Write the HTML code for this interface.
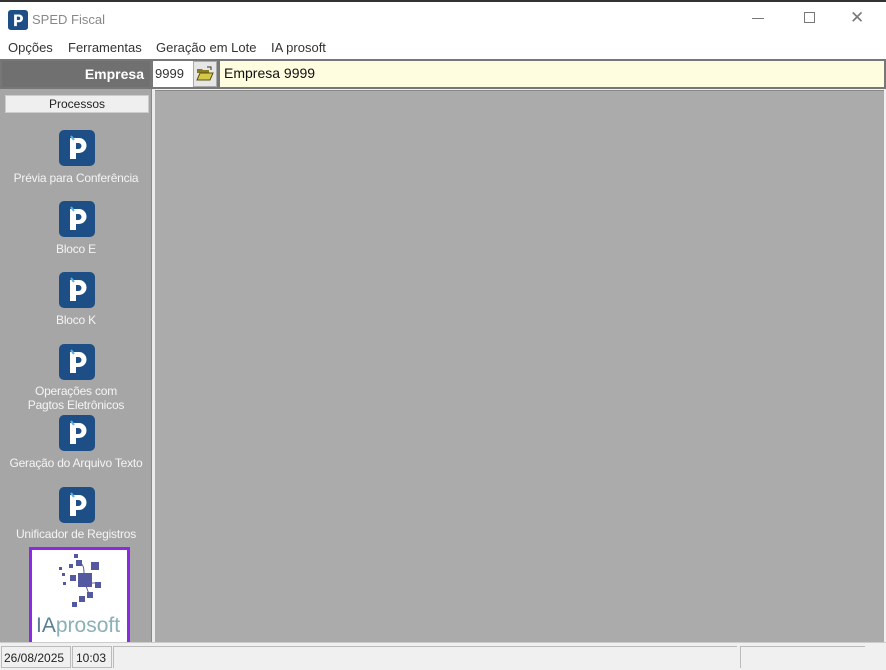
<!DOCTYPE html>
<html><head><style>
*{margin:0;padding:0;box-sizing:border-box}
body{width:886px;height:670px;overflow:hidden;background:#f0f0f0;font-family:"Liberation Sans",sans-serif;position:relative}
.a{position:absolute}
.lbl{position:absolute;left:0;width:152px;text-align:center;color:#f4f4f4;font-size:12px;line-height:14px;letter-spacing:-0.2px}
.ic{position:absolute;left:59px;width:36px;height:36px}
</style></head><body>
<div class="a" style="left:0;top:0;width:886px;height:2px;background:#333"></div>
<div class="a" style="left:0;top:2px;width:886px;height:36px;background:#fff"></div>
<svg class="a" style="left:8px;top:10px" width="20" height="20" viewBox="0 0 36 36"><rect width="36" height="36" rx="5" fill="#1d4f86"/><path d="M11 8h9a7 7 0 0 1 0 14h-4v7h-5z" fill="#fff"/><path d="M16 12h3a3 3 0 0 1 0 6h-3z" fill="#1d4f86"/></svg>
<div class="a" style="left:32px;top:12px;font-size:13px;color:#888">SPED Fiscal</div>
<div class="a" style="left:752px;top:18px;width:12px;height:1px;background:#777"></div>
<div class="a" style="left:804px;top:12px;width:11px;height:11px;border:1px solid #777"></div>
<div class="a" style="left:850px;top:8px;font-size:17px;color:#777">✕</div>
<div class="a" style="left:0;top:38px;width:886px;height:21px;background:#fff;font-size:13px;color:#333">
<span class="a" style="left:8px;top:2px">Opções</span><span class="a" style="left:68px;top:2px">Ferramentas</span><span class="a" style="left:156px;top:2px">Geração em Lote</span><span class="a" style="left:271px;top:2px">IA prosoft</span></div>
<div class="a" style="left:0;top:59px;width:886px;height:30px;background:#777"></div>
<div class="a" style="left:2px;top:61px;width:148px;height:26px;background:#707070;color:#fff;font-weight:bold;font-size:14px;text-align:right;padding:5px 6px">Empresa</div>
<div class="a" style="left:153px;top:61px;width:40px;height:26px;background:#fff;font-size:13px;color:#333;padding:5px 2px">9999</div>
<div class="a" style="left:193px;top:61px;width:24px;height:26px;background:#e6e6e6;border:1px solid #aaa"></div>
<svg class="a" style="left:196px;top:66px" width="18" height="15" viewBox="0 0 18 15"><path d="M1 3h5l1 1h6v3H1z" fill="#8a7a20"/><path d="M1 14L4 7h13l-3 7z" fill="#d4c84a" stroke="#5a5010"/><path d="M11 1l4 0 0 3" stroke="#333" fill="none"/></svg>
<div class="a" style="left:220px;top:61px;width:664px;height:26px;background:#fffde0;font-size:14px;color:#111;padding:4px 4px">Empresa 9999</div>
<div class="a" style="left:0;top:89px;width:152px;height:553px;background:#a6a6a6;border-right:1px solid #888"></div>
<div class="a" style="left:152px;top:89px;width:3px;height:553px;background:#ececec"></div>
<div class="a" style="left:155px;top:90px;width:729px;height:552px;background:#ababab;border-top:1px solid #888"></div>
<div class="a" style="left:5px;top:95px;width:144px;height:18px;background:#efefef;border:1px solid #ccc;font-size:12px;text-align:center;line-height:16px;color:#222">Processos</div>
<svg width="0" height="0" style="position:absolute"><defs><symbol id="p" viewBox="0 0 36 36"><rect width="36" height="36" rx="5" fill="#1d4f86"/><path d="M11 8h9a7.5 7.5 0 0 1 0 15h-3v6h-6z" fill="#fff"/><path d="M17 13h2.5a3 3 0 0 1 0 6H17z" fill="#1d4f86"/><path d="M12 6l3 4" stroke="#5ab0e0" stroke-width="2"/></symbol></defs></svg>
<svg class="ic" style="top:130px"><use href="#p"/></svg><div class="lbl" style="top:171px">Prévia para Conferência</div>
<svg class="ic" style="top:201px"><use href="#p"/></svg><div class="lbl" style="top:242px">Bloco E</div>
<svg class="ic" style="top:272px"><use href="#p"/></svg><div class="lbl" style="top:313px">Bloco K</div>
<svg class="ic" style="top:344px"><use href="#p"/></svg><div class="lbl" style="top:384px">Operações com<br>Pagtos Eletrônicos</div>
<svg class="ic" style="top:415px"><use href="#p"/></svg><div class="lbl" style="top:456px">Geração do Arquivo Texto</div>
<svg class="ic" style="top:487px"><use href="#p"/></svg><div class="lbl" style="top:527px">Unificador de Registros</div>
<div class="a" style="left:29px;top:547px;width:101px;height:99px;background:#fff;border:3px solid #8a2be2"></div>
<svg class="a" style="left:56px;top:553px" width="50" height="60" viewBox="0 0 50 60"><g fill="#5458a0"><rect x="22" y="20" width="14" height="14"/><rect x="35" y="9" width="8" height="8"/><rect x="20" y="7" width="6" height="6"/><rect x="14" y="22" width="6" height="6"/><rect x="39" y="29" width="6" height="6"/><rect x="31" y="39" width="6" height="6"/><rect x="23" y="43" width="6" height="6"/><rect x="16" y="49" width="5" height="5"/><rect x="18" y="1" width="4" height="4"/><rect x="13" y="11" width="4" height="4"/><rect x="3" y="14" width="3" height="3"/><rect x="6" y="20" width="3" height="3"/><rect x="7" y="29" width="3" height="3"/></g><path d="M22 10c6 0 6 6 6 11M35 30h5M30 33l3 8" stroke="#5458a0" fill="none"/></svg>
<div class="a" style="left:36px;top:614px;font-size:21px;color:#7090a0"><span style="color:#5a7f94">IA</span><span style="color:#8ab0b8">prosoft</span></div>
<div class="a" style="left:0;top:642px;width:886px;height:28px;background:#f0f0f0;border-top:1px solid #ccc"></div>
<div class="a" style="left:1px;top:646px;width:70px;height:22px;border:1px solid #bbb;font-size:12px;padding:4px 2px;color:#222">26/08/2025</div>
<div class="a" style="left:72px;top:646px;width:40px;height:22px;border:1px solid #bbb;font-size:12px;padding:4px 3px;color:#222">10:03</div>
<div class="a" style="left:113px;top:646px;width:624px;height:22px;border-top:1px solid #bbb;border-left:1px solid #bbb"></div>
<div class="a" style="left:740px;top:646px;width:125px;height:22px;border-top:1px solid #bbb;border-left:1px solid #bbb"></div>
</body></html>
